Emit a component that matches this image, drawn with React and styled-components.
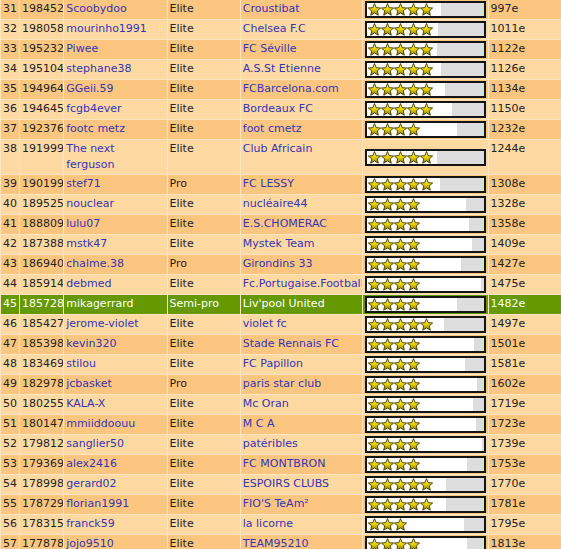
import React from "react";
import styled, { createGlobalStyle } from "styled-components";

const GlobalStyle = createGlobalStyle`
  html, body {
    margin: 0;
    padding: 0;
    background: #ffffff;
    overflow: hidden;
  }
`;

const Table = styled.table`
  border-collapse: separate;
  border-spacing: 1px;
  margin: -1px 0 0 0;
  background: #ffe6c0;
  table-layout: fixed;
  width: 600px;
  font-family: "DejaVu Sans", Verdana, sans-serif;
  font-size: 11px;
  line-height: 16px;
`;

const Row = styled.tr`
  background: ${(p) => (p.$active ? "#669900" : p.$odd ? "#fdc680" : "#ffd9a2")};
  color: ${(p) => (p.$active ? "#ffffff" : "#222222")};
`;

const Cell = styled.td`
  padding: 1px 2px;
  vertical-align: top;
  overflow: hidden;
  white-space: nowrap;
`;

const RankCell = styled(Cell)`
  width: 14px;
`;

const PointsCell = styled(Cell)`
  width: 39px;
`;

const LinkCell = styled(Cell)`
  color: ${(p) => (p.$active ? "#ffffff" : "#3434b4")};
`;

const NameCell = styled(LinkCell)`
  width: 98px;
  white-space: normal;
`;

const LevelCell = styled(Cell)`
  width: 68px;
`;

const ClubCell = styled(LinkCell)`
  width: 117px;
`;

const BarCell = styled(Cell)`
  width: 120px;
  vertical-align: middle;
`;

const EloCell = styled(Cell)`
  width: 106px;
`;

const Bar = styled.div`
  width: 117px;
  height: 13px;
  border: 2px solid #151515;
  background: #dddddd;
  position: relative;
  display: flex;
  align-items: center;
`;

const Fill = styled.div`
  position: absolute;
  left: 0;
  top: 0;
  bottom: 0;
  background: #ffffff;
`;

const Stars = styled.div`
  position: relative;
  display: flex;
  padding-left: 1px;
`;

const StarSvg = styled.svg`
  display: block;
  width: 13px;
  height: 13px;
`;

const Star = () => (
  <StarSvg viewBox="0 0 13 13">
    <defs>
      <linearGradient id="sg" x1="0" y1="0" x2="0" y2="1">
        <stop offset="0" stopColor="#fff68a" />
        <stop offset="0.5" stopColor="#e6d000" />
        <stop offset="1" stopColor="#8f7c00" />
      </linearGradient>
    </defs>
    <path
      d="M6.5 0.6 L8.2 4.65 L12.6 5 L9.26 7.9 L10.3 12.2 L6.5 9.9 L2.7 12.2 L3.74 7.9 L0.4 5 L4.8 4.65 Z"
      fill="url(#sg)"
      stroke="#3c3500"
      strokeWidth="0.9"
      strokeLinejoin="round"
    />
  </StarSvg>
);

const rows = [
  [31, "198452", "Scoobydoo", "Elite", "Croustibat", 5, 74, "997e"],
  [32, "198058", "mourinho1991", "Elite", "Chelsea F.C", 5, 71, "1011e"],
  [33, "195232", "Piwee", "Elite", "FC Séville", 5, 70, "1122e"],
  [34, "195104", "stephane38", "Elite", "A.S.St Etienne", 5, 74, "1126e"],
  [35, "194964", "GGeii.59", "Elite", "FCBarcelona.com", 5, 78, "1134e"],
  [36, "194645", "fcgb4ever", "Elite", "Bordeaux FC", 5, 85, "1150e"],
  [37, "192376", "footc metz", "Elite", "foot cmetz", 4, 90, "1232e"],
  [38, "191999", "The next ferguson", "Elite", "Club Africain", 5, 70, "1244e"],
  [39, "190199", "stef71", "Pro", "FC LESSY", 5, 73, "1308e"],
  [40, "189525", "nouclear", "Elite", "nucléaire44", 4, 99, "1328e"],
  [41, "188809", "lulu07", "Elite", "E.S.CHOMERAC", 4, 102, "1358e"],
  [42, "187388", "mstk47", "Elite", "Mystek Team", 4, 105, "1409e"],
  [43, "186940", "chalme.38", "Pro", "Girondins 33", 4, 94, "1427e"],
  [44, "185914", "debmed", "Elite", "Fc.Portugaise.Football", 4, 114, "1475e"],
  [45, "185728", "mikagerrard", "Semi-pro", "Liv'pool United", 4, 90, "1482e"],
  [46, "185427", "jerome-violet", "Elite", "violet fc", 5, 77, "1497e"],
  [47, "185398", "kevin320", "Elite", "Stade Rennais FC", 4, 107, "1501e"],
  [48, "183469", "stilou", "Elite", "FC Papillon", 4, 98, "1581e"],
  [49, "182978", "jcbasket", "Pro", "paris star club", 4, 110, "1602e"],
  [50, "180255", "KALA-X", "Elite", "Mc Oran", 4, 106, "1719e"],
  [51, "180147", "mmiiddoouu", "Elite", "M C A", 4, 109, "1723e"],
  [52, "179812", "sanglier50", "Elite", "patéribles", 4, 115, "1739e"],
  [53, "179369", "alex2416", "Elite", "FC MONTBRON", 4, 100, "1753e"],
  [54, "178998", "gerard02", "Elite", "ESPOIRS CLUBS", 5, 79, "1770e"],
  [55, "178729", "florian1991", "Elite", "FIO'S TeAm²", 5, 79, "1781e"],
  [56, "178315", "franck59", "Elite", "la licorne", 3, 97, "1795e"],
  [57, "177878", "jojo9510", "Elite", "TEAM95210", 4, 100, "1813e"],
];

const ACTIVE = 45;

export default function App() {
  return (
    <>
      <GlobalStyle />
      <Table>
        <tbody>
          {rows.map(([rank, pts, name, level, club, stars, fill, elo]) => {
            const active = rank === ACTIVE;
            return (
              <Row key={rank} $odd={rank % 2 === 1} $active={active}>
                <RankCell>{rank}</RankCell>
                <PointsCell>{pts}</PointsCell>
                <NameCell $active={active}>{name}</NameCell>
                <LevelCell>{level}</LevelCell>
                <ClubCell $active={active}>{club}</ClubCell>
                <BarCell>
                  <Bar>
                    <Fill style={{ width: fill }} />
                    <Stars>
                      {Array.from({ length: stars }, (_, i) => (
                        <Star key={i} />
                      ))}
                    </Stars>
                  </Bar>
                </BarCell>
                <EloCell>{elo}</EloCell>
              </Row>
            );
          })}
        </tbody>
      </Table>
    </>
  );
}
